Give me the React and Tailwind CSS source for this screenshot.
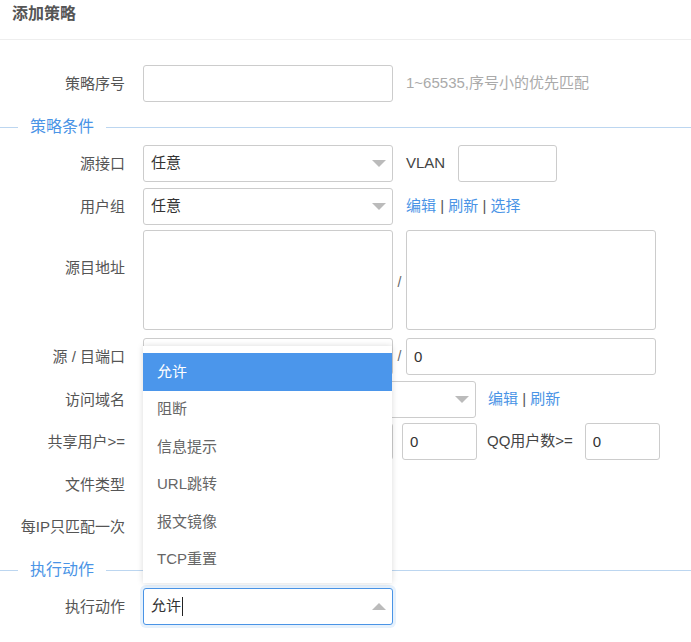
import React from 'react';

const LINK = 'text-[#4a94e6]';

function Label({ children, className = '' }) {
  return (
    <div className={`w-[125px] shrink-0 text-right text-[15px] text-[#555] leading-[37px] ${className}`}>
      {children}
    </div>
  );
}

function Box({ w = 'w-[250px]', h = 'h-[37px]', children, className = '' }) {
  return (
    <div className={`${w} ${h} shrink-0 border border-[#ccc] rounded-[3px] bg-white px-[7px] text-[15px] text-[#333] leading-[35px] ${className}`}>
      {children}
    </div>
  );
}

function Select({ w = 'w-[250px]', value, up = false, focused = false }) {
  return (
    <div
      className={`${w} h-[37px] shrink-0 rounded-[3px] bg-white pl-[7px] pr-[6px] flex items-center justify-between text-[15px] text-[#333] ${
        focused ? 'border border-[#4a94e6] ring-[3px] ring-[#e6f1fc]' : 'border border-[#ccc]'
      }`}
    >
      <span className="flex items-center">
        {value}
        {focused && <span className="ml-[1px] inline-block w-[1px] h-[19px] bg-[#222]" />}
      </span>
      {up ? (
        <span className="w-0 h-0 border-l-[7px] border-r-[7px] border-b-[7px] border-l-transparent border-r-transparent border-b-[#bbb]" />
      ) : (
        <span className="w-0 h-0 border-l-[7px] border-r-[7px] border-t-[7px] border-l-transparent border-r-transparent border-t-[#bbb]" />
      )}
    </div>
  );
}

function Legend({ children, className = '' }) {
  return (
    <div className={`h-[20px] flex items-center ${className}`}>
      <div className="w-[18px] h-px bg-[#bcd6f0]" />
      <div className="px-3 text-[16px] text-[#4a94e6] leading-[20px]">{children}</div>
      <div className="flex-1 h-px bg-[#bcd6f0]" />
    </div>
  );
}

function Row({ children, className = '' }) {
  return <div className={`flex items-center gap-[18px] ${className}`}>{children}</div>;
}

const OPTIONS = ['允许', '阻断', '信息提示', 'URL跳转', '报文镜像', 'TCP重置'];

export default function App() {
  return (
    <div className="w-[691px] h-[642px] bg-white overflow-hidden font-['Liberation_Sans','Noto_Sans_CJK_SC',sans-serif]">
      {/* Header */}
      <div className="h-[40px] border-b border-[#eee] px-3 pt-[4px] text-[16px] font-bold leading-[20px] text-[#555]">
        添加策略
      </div>

      <Row className="mt-[25px]">
        <Label>策略序号</Label>
        <Box />
        <span className="-ml-[5px] text-[15px] text-[#aaa]">1~65535,序号小的优先匹配</span>
      </Row>

      <Legend className="mt-[15px]">策略条件</Legend>

      <Row className="mt-[8px]">
        <Label>源接口</Label>
        <Select value="任意" />
        <div className="-ml-[5px] flex items-center gap-[13px]">
          <span className="text-[15px] text-[#444]">VLAN</span>
          <Box w="w-[99px]" />
        </div>
      </Row>

      <Row className="mt-[6px]">
        <Label>用户组</Label>
        <Select value="任意" />
        <span className="-ml-[5px] text-[15px] text-[#555]">
          <span className={LINK}>编辑</span> | <span className={LINK}>刷新</span> | <span className={LINK}>选择</span>
        </span>
      </Row>

      <div className="mt-[5px] flex items-start gap-[18px]">
        <Label className="mt-[19px]">源目地址</Label>
        <div className="flex items-center">
          <Box h="h-[100px]" />
          <span className="w-[13px] text-center text-[14px] text-[#666] mt-[4px]">/</span>
          <Box h="h-[100px]" />
        </div>
      </div>

      <Row className="mt-[8px]">
        <Label>源 / 目端口</Label>
        <div className="flex items-center">
          <Box />
          <span className="w-[13px] text-center text-[14px] text-[#666]">/</span>
          <Box>0</Box>
        </div>
      </Row>

      <Row className="mt-[6px]">
        <Label>访问域名</Label>
        <Select w="w-[333px]" value="" />
        <span className="-ml-[6px] text-[15px] text-[#555]">
          <span className={LINK}>编辑</span> | <span className={LINK}>刷新</span>
        </span>
      </Row>

      <Row className="mt-[5px]">
        <Label>共享用户&gt;=</Label>
        <div className="flex items-center">
          <Select value="" />
          <Box w="w-[75px]" className="ml-[9px]">0</Box>
          <span className="ml-[10px] text-[15px] text-[#444]">QQ用户数&gt;=</span>
          <Box w="w-[75px]" className="ml-[12px]">0</Box>
        </div>
      </Row>

      <Row className="mt-[6px]">
        <Label>文件类型</Label>
      </Row>

      <Row className="mt-[5px]">
        <Label>每IP只匹配一次</Label>
      </Row>

      <Legend className="mt-[15px]">执行动作</Legend>

      <Row className="mt-[8px]">
        <Label>执行动作</Label>
        <div className="relative">
          <Select value="允许" up focused />
          {/* Open option list */}
          <div className="absolute left-0 bottom-[calc(100%+5px)] w-[249px] bg-white pt-[7px] pb-[5px] shadow-[0_0_6px_rgba(0,0,0,0.15)] z-10">
            {OPTIONS.map((o, i) => (
              <div
                key={o}
                className={`h-[37.5px] pl-[14px] flex items-center text-[15px] ${
                  i === 0 ? 'bg-[#4b96eb] text-white' : 'text-[#666]'
                }`}
              >
                {o}
              </div>
            ))}
          </div>
        </div>
      </Row>
    </div>
  );
}
